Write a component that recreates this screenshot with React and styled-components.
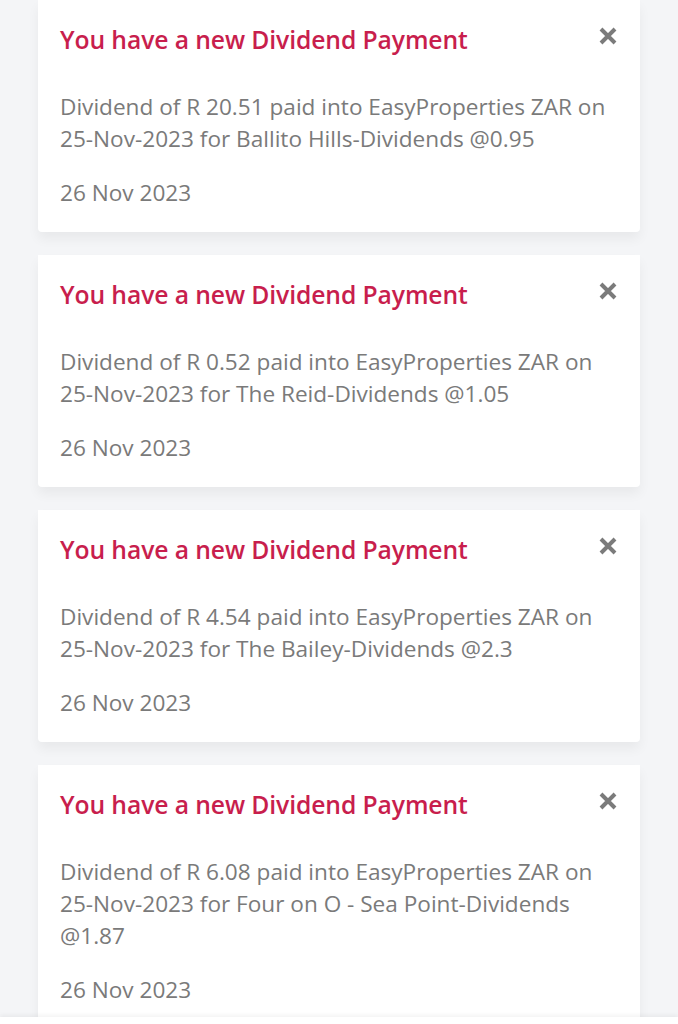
import React from 'react'
import styled, { createGlobalStyle } from 'styled-components'

const GlobalStyle = createGlobalStyle`
  html, body {
    margin: 0;
    padding: 0;
    background: #f4f5f7;
  }
  body {
    font-family: "Open Sans", "Noto Sans", sans-serif;
  }
`

const notifications = [
  {
    id: 1,
    body: 'Dividend of R 20.51 paid into EasyProperties ZAR on 25-Nov-2023 for Ballito Hills-Dividends @0.95',
    date: '26 Nov 2023',
  },
  {
    id: 2,
    body: 'Dividend of R 0.52 paid into EasyProperties ZAR on 25-Nov-2023 for The Reid-Dividends @1.05',
    date: '26 Nov 2023',
  },
  {
    id: 3,
    body: 'Dividend of R 4.54 paid into EasyProperties ZAR on 25-Nov-2023 for The Bailey-Dividends @2.3',
    date: '26 Nov 2023',
  },
  {
    id: 4,
    body: 'Dividend of R 6.08 paid into EasyProperties ZAR on 25-Nov-2023 for Four on O - Sea Point-Dividends @1.87',
    date: '26 Nov 2023',
  },
]

const CloseIcon = () => (
  <svg width="20" height="20" viewBox="0 0 20 20">
    <path d="M3 3 L17 17 M17 3 L3 17" stroke="#7b7b7b" strokeWidth="4" />
  </svg>
)

const App = () => {
  return (
    <>
      <GlobalStyle />
      <List>
        {notifications.map((n) => (
          <Card key={n.id}>
            <Header>
              <Title>You have a new Dividend Payment</Title>
              <CloseButton aria-label="Dismiss">
                <CloseIcon />
              </CloseButton>
            </Header>
            <Body>{n.body}</Body>
            <DateText>{n.date}</DateText>
          </Card>
        ))}
      </List>
      <BottomStrip />
    </>
  )
}

export default App

const List = styled.div`
  display: flex;
  flex-direction: column;
  gap: 23px;
  padding: 0 38px 40px;
`

const Card = styled.div`
  background: #fff;
  border-radius: 0 0 4px 4px;
  box-shadow: 0 7px 12px rgba(0, 0, 0, 0.05);
  padding: 22px 22px 23px;
`

const Header = styled.div`
  display: flex;
  justify-content: space-between;
  align-items: flex-start;
`

const Title = styled.h2`
  margin: 0;
  font-size: 24.7px;
  line-height: 36px;
  font-weight: 600;
  color: #c81e4d;
  letter-spacing: -0.1px;
`

const CloseButton = styled.button`
  border: none;
  background: none;
  padding: 0;
  margin: 4px 0 0;
  display: flex;
  cursor: pointer;
`

const Body = styled.p`
  margin: 33px 0 0;
  font-size: 22.6px;
  line-height: 32px;
  color: #7a7a7a;
`

const DateText = styled.div`
  margin-top: 22px;
  font-size: 22.6px;
  line-height: 32px;
  color: #7a7a7a;
`

const BottomStrip = styled.div`
  position: fixed;
  left: 0;
  right: 0;
  bottom: 0;
  height: 7px;
  background: #fff;
  box-shadow: 0 -2px 4px rgba(0, 0, 0, 0.05);
`
